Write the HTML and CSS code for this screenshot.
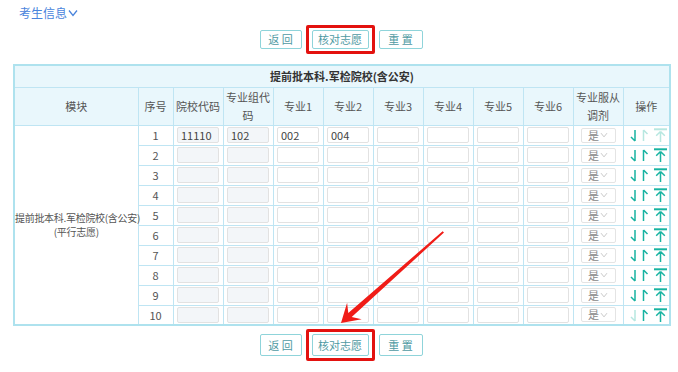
FILE: index.html
```html
<!DOCTYPE html>
<html lang="zh">
<head>
<meta charset="utf-8">
<link rel="stylesheet" href="styles.css">
</head>
<body>
<svg class="defs" width="0" height="0">
  <defs>
    <symbol id="ops" viewBox="0 1 46 18">
      <path class="p-down" d="M11 5V16M11 16L7 12"/>
      <path class="p-up" d="M19.5 5V16M19.5 5L23.5 9"/>
      <path class="p-bar" d="M30 4.3H43"/>
      <path class="p-top" d="M36.5 6.5V17M36.5 6.5L32.2 10.8M36.5 6.5L40.8 10.8"/>
    </symbol>
    <symbol id="chev" viewBox="0 0 10 8"><path class="p-chev" d="M1 1.5L5 6.5L9 1.5"/></symbol>
  </defs>
</svg>
<div class="page">
  <div class="top-link">考生信息<svg class="chev" width="10" height="8"><use href="#chev"/></svg></div>

  <div class="btn-bar">
    <button class="btn btn-back">返 回</button>
    <div class="hl"><button class="btn btn-check">核对志愿</button></div>
    <button class="btn btn-reset">重 置</button>
  </div>

  <table class="grid">
    <colgroup>
      <col class="c-mod"><col class="c-no"><col class="c-w"><col class="c-w"><col class="c-w"><col class="c-w"><col class="c-w"><col class="c-w"><col class="c-w"><col class="c-w"><col class="c-w"><col class="c-op">
    </colgroup>
    <thead>
      <tr class="title-row"><th colspan="12">提前批本科.军检院校(含公安)</th></tr>
      <tr class="head-row">
        <th>模块</th><th>序号</th><th>院校代码</th><th>专业组代<br>码</th><th>专业1</th><th>专业2</th><th>专业3</th><th>专业4</th><th>专业5</th><th>专业6</th><th>专业服从<br>调剂</th><th>操作</th>
      </tr>
    </thead>
    <tbody>
      <tr>
        <td class="mod" rowspan="10">提前批本科.军检院校(含公安)<br>(平行志愿)</td>
        <td class="no">1</td>
        <td><span class="inp ro">11110</span></td><td><span class="inp ro">102</span></td>
        <td><span class="inp">002</span></td><td><span class="inp">004</span></td><td><span class="inp"></span></td><td><span class="inp"></span></td><td><span class="inp"></span></td><td><span class="inp"></span></td>
        <td><span class="sel">是<svg class="sel-chev" width="8" height="6"><use href="#chev"/></svg></span></td>
        <td class="ops"><svg class="opsvg first" width="46" height="18"><use href="#ops"/></svg></td>
      </tr>
      <tr>
        <td class="no">2</td>
        <td><span class="inp ro"></span></td><td><span class="inp ro"></span></td>
        <td><span class="inp"></span></td><td><span class="inp"></span></td><td><span class="inp"></span></td><td><span class="inp"></span></td><td><span class="inp"></span></td><td><span class="inp"></span></td>
        <td><span class="sel">是<svg class="sel-chev" width="8" height="6"><use href="#chev"/></svg></span></td>
        <td class="ops"><svg class="opsvg" width="46" height="18"><use href="#ops"/></svg></td>
      </tr>
      <tr>
        <td class="no">3</td>
        <td><span class="inp ro"></span></td><td><span class="inp ro"></span></td>
        <td><span class="inp"></span></td><td><span class="inp"></span></td><td><span class="inp"></span></td><td><span class="inp"></span></td><td><span class="inp"></span></td><td><span class="inp"></span></td>
        <td><span class="sel">是<svg class="sel-chev" width="8" height="6"><use href="#chev"/></svg></span></td>
        <td class="ops"><svg class="opsvg" width="46" height="18"><use href="#ops"/></svg></td>
      </tr>
      <tr>
        <td class="no">4</td>
        <td><span class="inp ro"></span></td><td><span class="inp ro"></span></td>
        <td><span class="inp"></span></td><td><span class="inp"></span></td><td><span class="inp"></span></td><td><span class="inp"></span></td><td><span class="inp"></span></td><td><span class="inp"></span></td>
        <td><span class="sel">是<svg class="sel-chev" width="8" height="6"><use href="#chev"/></svg></span></td>
        <td class="ops"><svg class="opsvg" width="46" height="18"><use href="#ops"/></svg></td>
      </tr>
      <tr>
        <td class="no">5</td>
        <td><span class="inp ro"></span></td><td><span class="inp ro"></span></td>
        <td><span class="inp"></span></td><td><span class="inp"></span></td><td><span class="inp"></span></td><td><span class="inp"></span></td><td><span class="inp"></span></td><td><span class="inp"></span></td>
        <td><span class="sel">是<svg class="sel-chev" width="8" height="6"><use href="#chev"/></svg></span></td>
        <td class="ops"><svg class="opsvg" width="46" height="18"><use href="#ops"/></svg></td>
      </tr>
      <tr>
        <td class="no">6</td>
        <td><span class="inp ro"></span></td><td><span class="inp ro"></span></td>
        <td><span class="inp"></span></td><td><span class="inp"></span></td><td><span class="inp"></span></td><td><span class="inp"></span></td><td><span class="inp"></span></td><td><span class="inp"></span></td>
        <td><span class="sel">是<svg class="sel-chev" width="8" height="6"><use href="#chev"/></svg></span></td>
        <td class="ops"><svg class="opsvg" width="46" height="18"><use href="#ops"/></svg></td>
      </tr>
      <tr>
        <td class="no">7</td>
        <td><span class="inp ro"></span></td><td><span class="inp ro"></span></td>
        <td><span class="inp"></span></td><td><span class="inp"></span></td><td><span class="inp"></span></td><td><span class="inp"></span></td><td><span class="inp"></span></td><td><span class="inp"></span></td>
        <td><span class="sel">是<svg class="sel-chev" width="8" height="6"><use href="#chev"/></svg></span></td>
        <td class="ops"><svg class="opsvg" width="46" height="18"><use href="#ops"/></svg></td>
      </tr>
      <tr>
        <td class="no">8</td>
        <td><span class="inp ro"></span></td><td><span class="inp ro"></span></td>
        <td><span class="inp"></span></td><td><span class="inp"></span></td><td><span class="inp"></span></td><td><span class="inp"></span></td><td><span class="inp"></span></td><td><span class="inp"></span></td>
        <td><span class="sel">是<svg class="sel-chev" width="8" height="6"><use href="#chev"/></svg></span></td>
        <td class="ops"><svg class="opsvg" width="46" height="18"><use href="#ops"/></svg></td>
      </tr>
      <tr>
        <td class="no">9</td>
        <td><span class="inp ro"></span></td><td><span class="inp ro"></span></td>
        <td><span class="inp"></span></td><td><span class="inp"></span></td><td><span class="inp"></span></td><td><span class="inp"></span></td><td><span class="inp"></span></td><td><span class="inp"></span></td>
        <td><span class="sel">是<svg class="sel-chev" width="8" height="6"><use href="#chev"/></svg></span></td>
        <td class="ops"><svg class="opsvg" width="46" height="18"><use href="#ops"/></svg></td>
      </tr>
      <tr>
        <td class="no">10</td>
        <td><span class="inp ro"></span></td><td><span class="inp ro"></span></td>
        <td><span class="inp"></span></td><td><span class="inp"></span></td><td><span class="inp"></span></td><td><span class="inp"></span></td><td><span class="inp"></span></td><td><span class="inp"></span></td>
        <td><span class="sel">是<svg class="sel-chev" width="8" height="6"><use href="#chev"/></svg></span></td>
        <td class="ops"><svg class="opsvg last" width="46" height="18"><use href="#ops"/></svg></td>
      </tr>
    </tbody>
  </table>

  <div class="btn-bar bottom">
    <button class="btn btn-back">返 回</button>
    <div class="hl"><button class="btn btn-check">核对志愿</button></div>
    <button class="btn btn-reset">重 置</button>
  </div>

  <svg class="pointer" viewBox="0 0 678 372" width="678" height="372">
    <polygon points="341,323 361.7,319.2 351.7,316.9 444,232.6 442.6,231.2 348.3,313.1 347.1,302.8"/>
  </svg>
</div>
</body>
</html>
```

FILE: styles.css
```css
* { box-sizing: border-box; }
html, body { margin: 0; padding: 0; background: #fff; }
body {
  font-family: "Noto Sans CJK SC", "Microsoft YaHei", sans-serif;
  font-size: 11px;
  color: #555;
  width: 678px;
  height: 372px;
  overflow: hidden;
}
.defs { position: absolute; width: 0; height: 0; }
.page { position: relative; width: 678px; height: 372px; }

.top-link {
  padding: 4px 0 0 19px;
  height: 21px;
  line-height: 17px;
  font-size: 12px;
  color: #4a84dc;
  display: flex;
  align-items: center;
}
.p-chev { fill: none; stroke: var(--chev, #4a84dc); stroke-width: 1.3; }
.chev { margin-left: 1px; margin-top: 1px; --chev: #4a84dc; }

.btn-bar {
  width: 656px;
  margin: 4px 0 0 13px;
  display: flex;
  justify-content: center;
  align-items: center;
  gap: 4px;
  height: 29px;
}
.btn-bar.bottom { margin-top: 3px; height: 32px; }
.btn {
  font-family: "Noto Sans CJK SC", sans-serif;
  font-size: 11px;
  color: #4f9aa3;
  background: #fff;
  border: 1px solid #8fd4da;
  border-radius: 2px;
  height: 19px;
  padding: 0;
  line-height: 17px;
}
.bottom .btn { height: 22px; }
.btn-back { width: 42px; }
.btn-check { width: 57px; }
.btn-reset { width: 44px; }
.hl {
  border: 3px solid #e3120f;
  border-radius: 2px;
  padding: 2px 3px;
  display: flex;
}

.grid {
  margin: 10px 0 0 13px;
  width: 656px;
  border-collapse: collapse;
  table-layout: fixed;
  border: 2px solid #aee2ee;
}
.c-mod { width: 124px; }
.c-no { width: 35px; }
.c-w { width: 50px; }
.c-op { width: 47px; }
.grid th, .grid td {
  border: 1px solid #bfe5f3;
  padding: 0;
  text-align: center;
  vertical-align: middle;
}
.grid th { font-weight: normal; background: #e9f7fc; color: #555; }
.title-row th { height: 22px; font-weight: bold; color: #333; font-size: 11px; }
.head-row th { height: 38px; line-height: 18px; }
.grid td { height: 20px; background: #fff; }
.grid td.mod { font-size: 10px; line-height: 14px; white-space: nowrap; letter-spacing: -0.3px; color: #555; }
.grid td.no { color: #555; line-height: 14px; }

.inp {
  display: block;
  width: 42px;
  height: 16px;
  margin: 0 auto;
  border: 1px solid #e2e2e2;
  border-radius: 2px;
  background: #fff;
  text-align: left;
  padding-left: 3px;
  line-height: 14px;
  color: #444;
  font-size: 11px;
}
.inp.ro { background: #f3f6f9; }

.sel {
  display: flex;
  align-items: center;
  justify-content: center;
  gap: 1px;
  width: 35px;
  height: 15px;
  margin: 0 auto;
  border: 1px solid #e4e4e4;
  border-radius: 2px;
  color: #888;
  font-size: 11px;
  line-height: 13px;
}
.sel-chev { --chev: #c9c9c9; }

.ops { text-align: left !important; }
.opsvg { display: block; --on: #17b3a1; }
.p-down, .p-up, .p-bar, .p-top { fill: none; stroke-width: 1.5; }
.p-down { stroke: var(--c-down, var(--on, #17b3a1)); }
.p-up { stroke: var(--c-up, var(--on, #17b3a1)); }
.p-bar { stroke: var(--c-top, var(--on, #17b3a1)); stroke-width: 2; }
.p-top { stroke: var(--c-top, var(--on, #17b3a1)); }
.opsvg.first { --c-up: #b7e7e0; --c-top: #b7e7e0; }
.opsvg.last { --c-down: #b7e7e0; }

.pointer { position: absolute; left: 0; top: 0; pointer-events: none; }
.pointer polygon { fill: #f01c17; }
```
